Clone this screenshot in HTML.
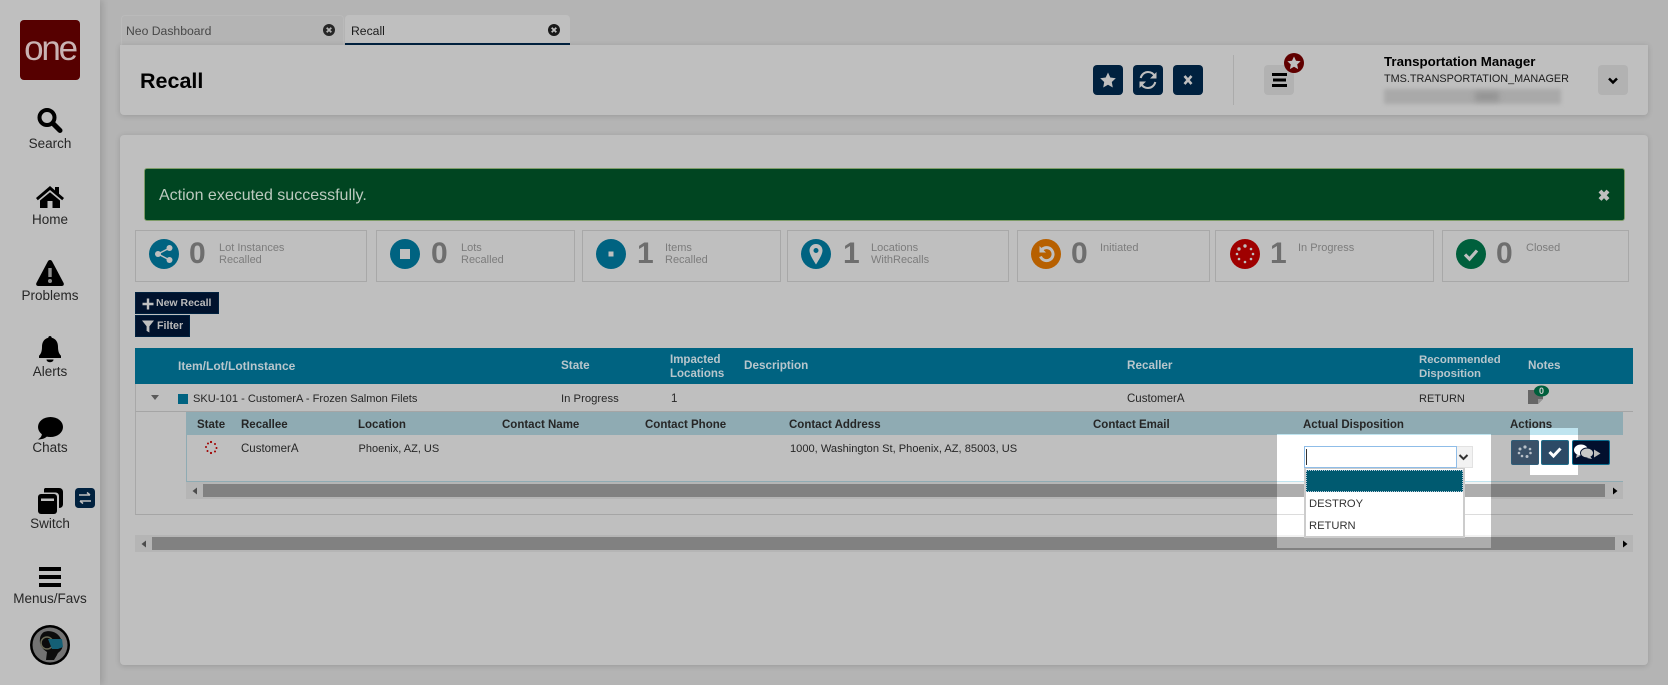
<!DOCTYPE html>
<html><head><meta charset="utf-8"><title>Recall</title>
<style>
html,body{margin:0;padding:0;width:1668px;height:685px;overflow:hidden;background:#f0f0f0;font-family:"Liberation Sans",sans-serif}
.b{position:absolute;box-sizing:border-box}
.t{position:absolute;white-space:nowrap;line-height:16px;color:#333;font-size:11.5px}
.nav{width:100px;left:0;text-align:center;font-size:13.5px;color:#333}
.th{font-weight:bold;font-size:11.7px}
.st{color:#333;font-weight:bold;font-size:11.5px}
.kpi{top:230px;height:52px;border:1px solid #e0e0e0;position:absolute;box-sizing:border-box}
.num{position:absolute;top:236px;font-size:30px;font-weight:bold;line-height:36px;color:#6e6e6e}
.lab{position:absolute;top:242px;font-size:11px;line-height:12px;color:#7c7c7c;white-space:nowrap}
svg{position:absolute;left:0;top:0}
</style></head><body>
<!-- sidebar -->
<div class="b" style="left:0;top:0;width:100px;height:685px;background:#fff;box-shadow:3px 0 6px rgba(0,0,0,.12)"></div>
<!-- tabs -->
<div class="b" style="left:121px;top:15px;width:223px;height:30px;background:#f0f0f0;border:1px solid #f8f8f8;border-bottom:0;border-radius:4px 4px 0 0"></div>
<div class="b" style="left:345px;top:15px;width:225px;height:30px;background:#fff;border-bottom:2px solid #012d55;border-radius:4px 4px 0 0"></div>
<!-- header panel -->
<div class="b" style="left:120px;top:45px;width:1528px;height:70px;background:#fff;border-radius:0 0 4px 4px;box-shadow:0 1px 6px rgba(0,0,0,.15)"></div>
<div class="b" style="left:120px;top:135px;width:1528px;height:530px;background:#fff;border-radius:4px;box-shadow:0 1px 6px rgba(0,0,0,.15)"></div>
<!-- header items -->
<div class="b" style="left:1093px;top:65px;width:30px;height:30px;background:#012d55;border-radius:4px"></div>
<div class="b" style="left:1133px;top:65px;width:30px;height:30px;background:#012d55;border-radius:4px"></div>
<div class="b" style="left:1173px;top:65px;width:30px;height:30px;background:#012d55;border-radius:4px"></div>
<div class="b" style="left:1233px;top:55px;width:1px;height:50px;background:#e4e4e4"></div>
<div class="b" style="left:1264px;top:65px;width:30px;height:30px;background:#eee;border-radius:4px"></div>
<div class="b" style="left:1598px;top:65px;width:30px;height:30px;background:#eee;border-radius:4px"></div>
<div class="b" style="left:1384px;top:89px;width:177px;height:15px;background:#e2e2e2;filter:blur(2px)"></div>
<div class="b" style="left:1475px;top:92px;width:24px;height:9px;background:#c6c6c6;filter:blur(3px)"></div>
<!-- alert -->
<div class="b" style="left:144px;top:168px;width:1481px;height:53px;background:#005c2d;border:1px solid #a8d08d;border-radius:3px"></div>
<!-- KPIs -->
<div class="kpi" style="left:135px;width:232px"></div>
<div class="kpi" style="left:376px;width:199px"></div>
<div class="kpi" style="left:582px;width:199px"></div>
<div class="kpi" style="left:787px;width:222px"></div>
<div class="kpi" style="left:1017px;width:193px"></div>
<div class="kpi" style="left:1215px;width:219px"></div>
<div class="kpi" style="left:1442px;width:187px"></div>
<!-- buttons -->
<div class="b" style="left:135px;top:292px;width:84px;height:22px;background:#00183d;border:1px solid #012d55"></div>
<div class="b" style="left:135px;top:315px;width:55px;height:22px;background:#00183d;border:1px solid #012d55"></div>
<!-- table -->
<div class="b" style="left:135px;top:348px;width:1498px;height:36px;background:#0085ad"></div>
<div class="b" style="left:135px;top:384px;width:1498px;height:28px;border-bottom:1px solid #dcdcdc;border-left:1px solid #e0e0e0"></div>
<div class="b" style="left:135px;top:412px;width:1498px;height:103px;border-bottom:1px solid #dcdcdc;border-left:1px solid #e0e0e0"></div>
<div class="b" style="left:186px;top:412px;width:1437px;height:23px;background:#bfe4ef"></div>
<div class="b" style="left:186px;top:435px;width:1437px;height:47px;border-left:1px solid #bfe4ef;border-bottom:1px solid #bfe4ef"></div>
<!-- scrollbars -->
<div class="b" style="left:186px;top:482px;width:1437px;height:17px;background:#f2f2f2"></div>
<div class="b" style="left:203px;top:484px;width:1402px;height:13px;background:#adadad"></div>
<div class="b" style="left:135px;top:535px;width:1498px;height:17px;background:#f2f2f2"></div>
<div class="b" style="left:152px;top:537px;width:1463px;height:13px;background:#adadad"></div>
<!-- spotlight white -->
<div class="b" style="left:1277px;top:435px;width:214px;height:46px;background:#fff"></div>
<div class="b" style="left:1277px;top:497px;width:214px;height:17px;background:#fff"></div>
<div class="b" style="left:1277px;top:515px;width:214px;height:20px;background:#fff"></div>

<!-- icons -->
<svg width="1668" height="685" viewBox="0 0 1668 685">
<!-- sidebar icons -->
<g fill="#000">
<circle cx="47" cy="117.500" r="7.500" fill="none" stroke="#000" stroke-width="4"/>
<path d="M53.500 124l6.500 6.500" stroke="#000" stroke-width="5" stroke-linecap="round"/>
<path d="M50 186L36 198l1.800 2.200L50 190l12.200 10.200L64 198l-5-4.200V187h-4v3.400z"/>
<path d="M40 200.500L50 192.200l10 8.300V208h-7.500v-7h-5v7H40z"/>
<path d="M50 260c1 0 1.700 .6 2.200 1.500L63.600 283c.7 1.500-.2 3-1.800 3H38.200c-1.600 0-2.500-1.500-1.800-3L47.800 261.500C48.300 260.600 49 260 50 260z"/>
<path d="M50 336c1 0 1.700 .7 1.700 1.700 4.300 1 6.300 4.500 6.300 9 0 4.500 1 7 3 9V358H39v-2.300c2-2 3-4.500 3-9 0-4.500 2-8 6.300-9 0-1 .7-1.700 1.700-1.700z"/>
<path d="M46.500 359.500h7c0 1.600-1.500 2.700-3.500 2.700s-3.500-1.100-3.500-2.700z"/>
<ellipse cx="50.500" cy="427" rx="12.500" ry="10"/>
<path d="M42 433c0 3-1.500 5-4 6.500 3.500 0 7-1 9.500-3.500z"/>
<path d="M45 488h14c2.500 0 4 1.500 4 4v12c0 2.500-1.500 4-4 4V496c0-2-1.500-3.500-3.500-3.500H44V489z"/>
<rect x="38" y="494" width="19" height="20" rx="3"/>
<rect x="39" y="567" width="22" height="4"/><rect x="39" y="575" width="22" height="4"/><rect x="39" y="583" width="22" height="4"/>
</g>
<rect x="48.300" y="268" width="3.400" height="9" fill="#bfbfbf"/><circle cx="50" cy="281" r="2" fill="#bfbfbf"/>
<rect x="41" y="498.500" width="13" height="2.500" fill="#fff"/>
<rect x="75" y="488" width="20" height="20" rx="3.500" fill="#012d55"/>
<path d="M79 495h11m-3-2.500l3 2.500M91 501H80m3 2.500L80 501" stroke="#fff" stroke-width="1.500" fill="none"/>
<!-- avatar -->
<circle cx="50" cy="645" r="20" fill="#000"/>
<circle cx="50" cy="645" r="17.500" fill="#9a9a9a"/>
<path d="M44 632c8-3 17 2 18 11 0 3 1 5-1 7-1 2-3 2-4 5l-3 5h-8l1-8c-5-3-8-8-7-13 0-3 2-6 4-7z" fill="#111"/>
<circle cx="47" cy="643" r="6" fill="none" stroke="#8c8c70" stroke-width="1.500"/>
<path d="M48 639h14l1 8-5 2h-6z" fill="#1b7f9c"/>
<!-- header icons -->
<path d="M1108 72.500l2.300 5 5.500.7-4 3.800 1 5.500-4.800-2.700-4.800 2.700 1-5.500-4-3.800 5.500-.7z" fill="#fff"/>
<path d="M1155 76.500c-1.500-3-4-4.500-7-4.500-3.500 0-6.500 2.500-7.300 6M1141 83.500c1.500 3 4 4.500 7 4.500 3.500 0 6.500-2.500 7.300-6" fill="none" stroke="#fff" stroke-width="2"/>
<path d="M1156.500 72v6.500H1150zM1139.500 88v-6.500h6.500z" fill="#fff"/>
<path d="M1184.500 76l7 8m0-8l-7 8" stroke="#fff" stroke-width="2.600"/>
<rect x="1272" y="73" width="15" height="3" fill="#000"/><rect x="1273" y="78.500" width="13" height="3" fill="#000"/><rect x="1272" y="84" width="15" height="3" fill="#000"/>
<circle cx="1294" cy="63" r="10" fill="#810000"/>
<path d="M1294 56.500l2 4.200 4.600.6-3.400 3.200.9 4.600-4.100-2.300-4.100 2.300.9-4.600-3.400-3.200 4.600-.6z" fill="#fff"/>
<path d="M1609 78.500l4 4 4-4" fill="none" stroke="#000" stroke-width="2.500"/>
<!-- tab close -->
<circle cx="329" cy="30" r="6" fill="#333"/><path d="M326.700 27.700l4.600 4.600m0-4.600l-4.600 4.600" stroke="#f0f0f0" stroke-width="1.800"/>
<circle cx="554" cy="30" r="6" fill="#222"/><path d="M551.700 27.700l4.600 4.600m0-4.600l-4.600 4.600" stroke="#fff" stroke-width="1.800"/>
<!-- alert close -->
<path d="M1600 191l8 8.500m0-8.500l-8 8.500" stroke="#fff" stroke-width="4"/>
<!-- KPI circles -->
<circle cx="164" cy="254" r="15" fill="#0085ad"/>
<g fill="#fff"><circle cx="158" cy="254" r="3"/><circle cx="169.500" cy="248" r="3"/><circle cx="169.500" cy="260" r="3"/></g>
<path d="M158 254l11.500-6M158 254l11.500 6" stroke="#fff" stroke-width="1.500"/>
<circle cx="405" cy="254" r="15" fill="#0085ad"/><rect x="400" y="249" width="10" height="10" fill="#fff"/>
<circle cx="611" cy="254" r="15" fill="#0085ad"/><rect x="608.500" y="251.500" width="5" height="5" fill="#fff"/>
<circle cx="816" cy="254" r="15" fill="#0085ad"/>
<path fill-rule="evenodd" d="M816 244c4 0 6.500 3 6.500 6.500 0 4-4 10-6.500 14-2.500-4-6.500-10-6.500-14 0-3.500 2.500-6.500 6.500-6.500zm0 4a2.500 2.500 0 100 5 2.500 2.500 0 000-5z" fill="#fff"/>
<circle cx="1046" cy="254" r="15" fill="#f58000"/>
<path d="M1042 249.500a6.500 6.500 0 11-1.500 7" fill="none" stroke="#fff" stroke-width="3"/><path d="M1039.500 246v6.500h6.500z" fill="#fff"/>
<circle cx="1245" cy="254" r="15" fill="#d50000"/>
<g fill="#fff"><circle cx="1245" cy="246" r="1.700"/><circle cx="1251" cy="249" r="1.300"/><circle cx="1253" cy="254" r="1.300"/><circle cx="1251" cy="259" r="1.300"/><circle cx="1245" cy="262" r="1.300"/><circle cx="1239" cy="259" r="1.300"/><circle cx="1237" cy="254" r="1.300"/><circle cx="1239" cy="249" r="1.700"/></g>
<circle cx="1471" cy="254" r="15" fill="#007f50"/>
<path d="M1465 254.500l4.500 4.500 7.500-8.500" fill="none" stroke="#fff" stroke-width="3.200"/>
<!-- btn icons -->
<path d="M148 298.500v11M142.500 304h11" stroke="#fff" stroke-width="2.400"/>
<path d="M142 320.500h12l-4.600 5.800v6.200l-2.800-1.600v-4.600z" fill="#fff"/>
<!-- row -->
<path d="M151 395h8l-4 5z" fill="#787878"/>
<rect x="178" y="394" width="10" height="10" fill="#0085ad"/>
<path d="M1528 390h15v9l-5 5h-10z" fill="#888"/><path d="M1538 404v-5h5z" fill="#c4c4c4"/>
<ellipse cx="1541.500" cy="391" rx="7.500" ry="5.500" fill="#007f50"/>
<!-- spinner -->
<g fill="#d50000"><circle cx="211" cy="442" r="1.100"/><circle cx="215" cy="444" r="1"/><circle cx="216.500" cy="448" r="1"/><circle cx="215" cy="451.500" r="1"/><circle cx="211" cy="453" r="1.100"/><circle cx="207.500" cy="451" r="1"/><circle cx="206" cy="447" r="1"/><circle cx="208" cy="443.500" r="1"/></g>
<!-- scroll arrows -->
<path d="M197 487.500v7l-4.500-3.500z" fill="#666"/><path d="M1613 487.500v7l4.500-3.500z" fill="#000"/>
<path d="M146 540.500v7l-4.500-3.500z" fill="#666"/><path d="M1623 540.500v7l4.500-3.500z" fill="#000"/>
</svg>

<!-- dropdown -->
<div class="b" style="left:1456px;top:446px;width:17px;height:22px;background:#f2f2f2;border:1px solid #e2e2e2"></div>
<div class="b" style="left:1304px;top:446px;width:152.500px;height:22px;background:#fff;border:1px solid #8fbde8"></div>
<div class="b" style="left:1306px;top:449px;width:1px;height:16px;background:#333"></div>
<div class="b" style="left:1304px;top:468px;width:161px;height:70px;background:#fff;border:2px solid #ccc;border-top-width:1px"></div>
<div class="b" style="left:1306px;top:470px;width:157px;height:22px;background:#005a70;border:1px dotted #bcd"></div>
<svg width="1668" height="685" viewBox="0 0 1668 685"><path d="M1459.500 455l4 4 4-4" fill="none" stroke="#333" stroke-width="2"/></svg>

<!-- dim overlay with holes -->
<div class="b" style="left:0;top:0;width:1668px;height:685px;background:rgba(0,0,0,.25);clip-path:path(evenodd,'M0 0H1668V685H0Z M1277 434H1491V548H1277Z M1530 428H1578V475H1530Z')"></div>

<!-- action buttons above overlay -->
<div class="b" style="left:1511px;top:440px;width:28px;height:25px;background:#3a5168;border:1px solid #2f5d78;border-radius:2px"></div>
<div class="b" style="left:1541px;top:440px;width:28px;height:25px;background:#2c4a66;border:1px solid #1f6a88;border-radius:2px"></div>
<div class="b" style="left:1572px;top:440px;width:38px;height:25px;background:#02102e;border:1px solid #0a6a8c;border-radius:2px"></div>
<svg width="1668" height="685" viewBox="0 0 1668 685">
<g fill="#b8c0c8"><circle cx="1525" cy="447" r="1.600"/><circle cx="1530" cy="449" r="1.300"/><circle cx="1530.500" cy="453" r="1.300"/><circle cx="1527" cy="456.500" r="1.500"/><circle cx="1522" cy="456" r="1.300"/><circle cx="1519" cy="453" r="1.300"/><circle cx="1520" cy="449" r="1.500"/></g>
<path d="M1549.500 452l4 4 7-7.500" fill="none" stroke="#fff" stroke-width="3"/>
<ellipse cx="1581" cy="450" rx="7" ry="5.500" fill="#fff"/><ellipse cx="1587" cy="453" rx="6.500" ry="5" fill="#c8c8c8" stroke="#02102e"/>
<path d="M1577 454l-1 4 4-2zM1590 456l2 3-5-1z" fill="#c8c8c8"/>
<path d="M1594 449.500l6.500 4-6.500 4z" fill="#bbb"/>
</svg>

<!-- logo -->
<div class="b" style="left:20px;top:20px;width:60px;height:60px;background:#560000;border-radius:4px"></div>
<div class="t" style="left:20px;top:29px;width:60px;text-align:center;font-size:35px;line-height:40px;color:#c9b3b3;letter-spacing:-2.200px">one</div>
<!-- sidebar labels -->
<div class="t nav" style="top:136px;color:#262626">Search</div>
<div class="t nav" style="top:212px;color:#262626">Home</div>
<div class="t nav" style="top:288px;color:#262626">Problems</div>
<div class="t nav" style="top:364px;color:#262626">Alerts</div>
<div class="t nav" style="top:440px;color:#262626">Chats</div>
<div class="t nav" style="top:516px;color:#262626">Switch</div>
<div class="t nav" style="top:591px;color:#262626;font-size:13.500px">Menus/Favs</div>
<!-- tabs text -->
<div class="t" style="left:126px;top:23px;font-size:12.200px;color:#484848">Neo Dashboard</div>
<div class="t" style="left:351px;top:23px;font-size:12.200px;color:#1c1c1c">Recall</div>
<div class="t" style="left:140px;top:69px;font-size:21.500px;line-height:24px;font-weight:bold;color:#000">Recall</div>
<div class="t" style="left:1384px;top:54px;font-size:13.300px;font-weight:bold;color:#000">Transportation Manager</div>
<div class="t" style="left:1384px;top:71px;font-size:10.850px;color:#1c1c1c">TMS.TRANSPORTATION_MANAGER</div>
<div class="t" style="left:159px;top:187px;font-size:16px;line-height:18px;color:#bccabf">Action executed successfully.</div>
<!-- KPI text -->
<div class="num" style="left:189px">0</div><div class="lab" style="left:219px">Lot Instances<br>Recalled</div>
<div class="num" style="left:431px">0</div><div class="lab" style="left:461px">Lots<br>Recalled</div>
<div class="num" style="left:637px">1</div><div class="lab" style="left:665px">Items<br>Recalled</div>
<div class="num" style="left:843px">1</div><div class="lab" style="left:871px">Locations<br>WithRecalls</div>
<div class="num" style="left:1071px">0</div><div class="lab" style="left:1100px">Initiated</div>
<div class="num" style="left:1270px">1</div><div class="lab" style="left:1298px">In Progress</div>
<div class="num" style="left:1496px">0</div><div class="lab" style="left:1526px">Closed</div>
<div class="t" style="left:156px;top:295px;font-size:10.500px;font-weight:bold;color:#bbb">New Recall</div>
<div class="t" style="left:157px;top:318px;font-size:10.700px;font-weight:bold;color:#bbb">Filter</div>
<!-- table text (dimmed colours) -->
<div class="t th" style="left:178px;top:358px;font-size:12px;color:#b8c6cc">Item/Lot/LotInstance</div>
<div class="t th" style="left:561px;top:358px;color:#b8c6cc">State</div>
<div class="t th" style="left:670px;top:353px;line-height:14px;font-size:11.500px;color:#b8c6cc">Impacted<br>Locations</div>
<div class="t th" style="left:744px;top:358px;color:#b8c6cc">Description</div>
<div class="t th" style="left:1127px;top:358px;color:#b8c6cc">Recaller</div>
<div class="t th" style="left:1419px;top:353px;line-height:14px;font-size:11.400px;color:#b8c6cc">Recommended<br>Disposition</div>
<div class="t th" style="left:1528px;top:358px;color:#b8c6cc">Notes</div>
<div class="t" style="left:193px;top:391px;font-size:11.100px;color:#262626">SKU-101 - CustomerA - Frozen Salmon Filets</div>
<div class="t" style="left:561px;top:391px;font-size:11.300px;color:#262626">In Progress</div>
<div class="t" style="left:671px;top:391px;color:#262626">1</div>
<div class="t" style="left:1127px;top:391px;color:#262626">CustomerA</div>
<div class="t" style="left:1419px;top:391px;font-size:11px;color:#262626">RETURN</div>
<div class="t" style="left:1539px;top:383px;font-size:9px;font-weight:bold;color:#ccc">0</div>
<div class="t st" style="left:197px;top:417px;color:#262626">State</div>
<div class="t st" style="left:241px;top:417px;color:#262626">Recallee</div>
<div class="t st" style="left:358px;top:417px;color:#262626">Location</div>
<div class="t st" style="left:502px;top:417px;color:#262626">Contact Name</div>
<div class="t st" style="left:645px;top:417px;color:#262626">Contact Phone</div>
<div class="t st" style="left:789px;top:417px;color:#262626">Contact Address</div>
<div class="t st" style="left:1093px;top:417px;color:#262626">Contact Email</div>
<div class="t st" style="left:1303px;top:417px;color:#262626">Actual Disposition</div>
<div class="t st" style="left:1510px;top:417px;color:#262626">Actions</div>
<div class="t" style="left:241px;top:441px;color:#262626">CustomerA</div>
<div class="t" style="left:358.500px;top:441px;font-size:11px;color:#262626">Phoenix, AZ, US</div>
<div class="t" style="left:790px;top:441px;font-size:11.100px;color:#262626">1000, Washington St, Phoenix, AZ, 85003, US</div>
<div class="t" style="left:1309px;top:496px;font-size:11.200px;color:#333">DESTROY</div>
<div class="t" style="left:1309px;top:518px;font-size:11.200px;color:#333">RETURN</div>
</body></html>
